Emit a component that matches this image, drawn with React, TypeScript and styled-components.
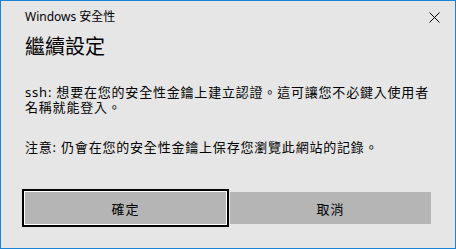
import React from 'react'
import styled, { createGlobalStyle } from 'styled-components'

const GlobalStyle = createGlobalStyle`
  html, body {
    margin: 0;
    padding: 0;
    background: #e6e6e6;
  }
  * {
    box-sizing: border-box;
  }
`

const FONT = `"Segoe UI", "Noto Sans", "Noto Sans CJK TC", sans-serif`

const App = () => {
  return (
    <>
      <GlobalStyle />
      <Dialog>
        <TitleBar>
          <WindowTitle>Windows 安全性</WindowTitle>
          <CloseButton aria-label="關閉">
            <svg width="11" height="11" viewBox="0 0 11 11">
              <path d="M0.5 0.5 L10.5 10.5 M10.5 0.5 L0.5 10.5" stroke="#000" strokeWidth="1" fill="none" />
            </svg>
          </CloseButton>
        </TitleBar>

        <Heading>繼續設定</Heading>

        <Body>
          <Paragraph>ssh: 想要在您的安全性金鑰上建立認證。這可讓您不必鍵入使用者名稱就能登入。</Paragraph>
          <Paragraph>注意: 仍會在您的安全性金鑰上保存您瀏覽此網站的記錄。</Paragraph>
        </Body>

        <ButtonRow>
          <Button $focused>確定</Button>
          <Button>取消</Button>
        </ButtonRow>
      </Dialog>
    </>
  )
}

export default App

const Dialog = styled.div`
  width: 456px;
  height: 249px;
  border: 1px solid #1883d7;
  background: #e6e6e6;
  padding: 0 24px 24px;
  display: flex;
  flex-direction: column;
  font-family: ${FONT};
  color: #000;
`

const TitleBar = styled.div`
  height: 32px;
  display: flex;
  align-items: center;
  justify-content: space-between;
`

const WindowTitle = styled.span`
  font-size: 12px;
  line-height: 16px;
  color: #000;
`

const CloseButton = styled.button`
  border: none;
  background: transparent;
  padding: 0;
  margin-right: -9px;
  width: 11px;
  height: 11px;
  display: flex;
  cursor: pointer;
`

const Heading = styled.h1`
  margin: 2px 0 0;
  font-size: 20px;
  line-height: 24px;
  font-weight: 400;
`

const Body = styled.div`
  margin-top: 26px;
  display: flex;
  flex-direction: column;
  gap: 25px;
`

const Paragraph = styled.p`
  margin: 0;
  font-size: 13px;
  line-height: 15px;
  letter-spacing: 0.8px;
`

const ButtonRow = styled.div`
  margin-top: auto;
  display: grid;
  grid-template-columns: 1fr 1fr;
  gap: 4px;
`

const Button = styled.button<{ $focused?: boolean }>`
  height: 32px;
  border: none;
  background: #b5b5b5;
  font-family: ${FONT};
  font-size: 13px;
  letter-spacing: 1px;
  color: #000;
  padding: 0;
  box-shadow: ${(p) => (p.$focused ? '0 0 0 1px #fff, 0 0 0 3px #000' : 'none')};
`
